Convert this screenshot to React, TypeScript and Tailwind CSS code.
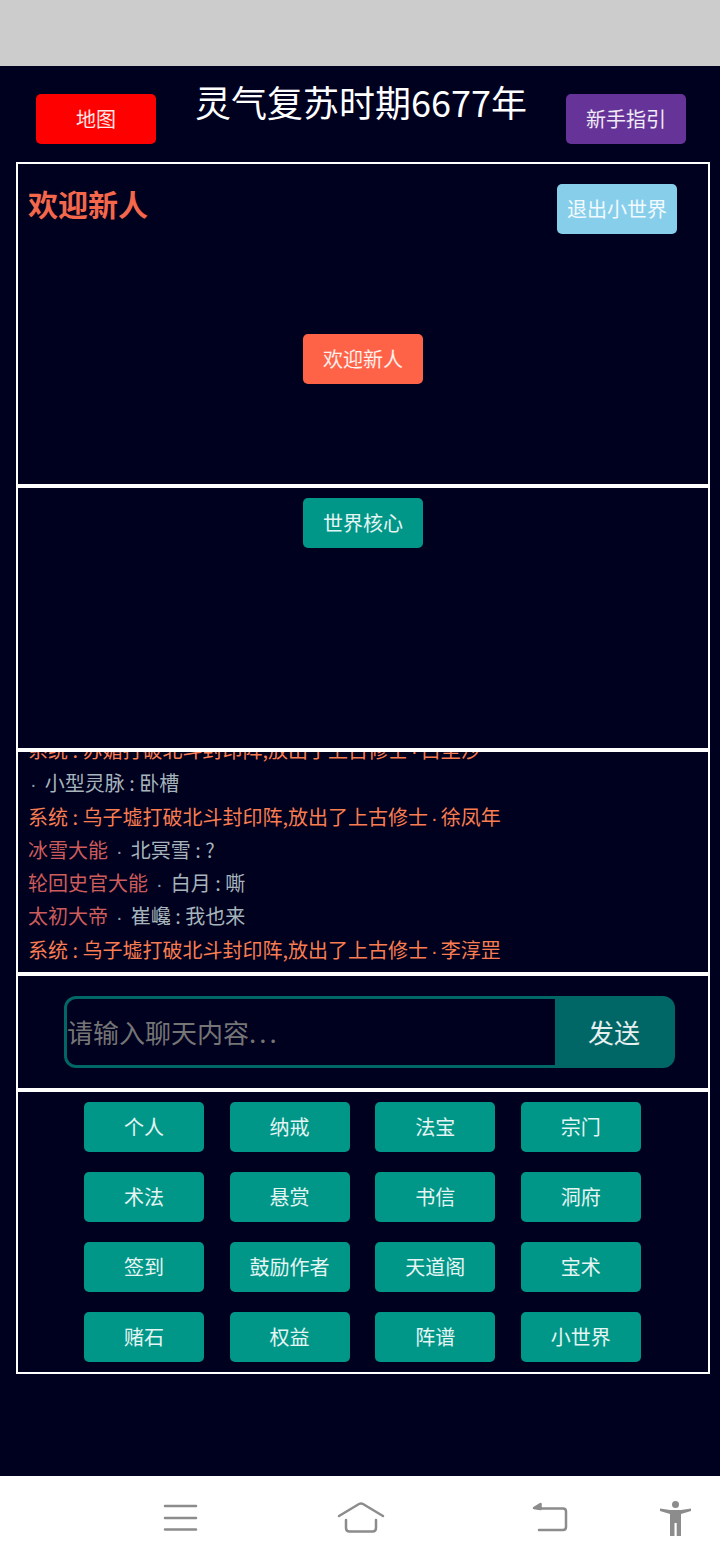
const font = "font-['Noto_Sans_CJK_SC','Noto_Sans',sans-serif]"
const dotFont = "font-['Liberation_Sans',sans-serif]"

const chat = [
  { sys: ['系统 : 苏媚打破北斗封印阵,放出了上古修士', '白尘沙'] },
  { title: '', name: '小型灵脉 : 卧槽' },
  { sys: ['系统 : 乌子墟打破北斗封印阵,放出了上古修士', '徐凤年'] },
  { title: '冰雪大能', name: '北冥雪 : ?' },
  { title: '轮回史官大能', name: '白月 : 嘶' },
  { title: '太初大帝', name: '崔巉 : 我也来' },
  { sys: ['系统 : 乌子墟打破北斗封印阵,放出了上古修士', '李淳罡'] },
]

const menu = ['个人', '纳戒', '法宝', '宗门', '术法', '悬赏', '书信', '洞府', '签到', '鼓励作者', '天道阁', '宝术', '赌石', '权益', '阵谱', '小世界']

function Btn({ label, color }: { label: string; color: string }) {
  return (
    <button className={`w-[120px] h-[50px] rounded-[5px] text-[20px] leading-[50px] text-white/90 text-center ${color}`}>
      {label}
    </button>
  )
}

export default function App() {
  return (
    <div className={`w-[720px] h-[1560px] flex flex-col overflow-hidden bg-[#00001f] ${font}`}>
      <div className="h-[66px] shrink-0 bg-[#cccccc]" />

      <div className="h-[96px] shrink-0 flex justify-between pl-9 pr-[34px] pt-7">
        <Btn label="地图" color="bg-[#ff0000]" />
        <h1 className="text-[36px] leading-[50px] -mt-[18px] text-white whitespace-nowrap h-[50px]">灵气复苏时期6677年</h1>
        <Btn label="新手指引" color="bg-[#663399]" />
      </div>

      <div className="mx-4 w-[694px] h-[1212px] shrink-0 border-2 border-white flex flex-col">
        <div className="h-[320px] shrink-0 flex flex-col px-[10px] pt-5">
          <div className="flex justify-between items-start pr-[21px]">
            <h2 className="text-[30px] leading-[44px] -mt-[3px] font-bold text-[#f4674b]">欢迎新人</h2>
            <Btn label="退出小世界" color="bg-[#87ceeb]" />
          </div>
          <div className="flex justify-center mt-[100px]">
            <Btn label="欢迎新人" color="bg-[#ff6347]" />
          </div>
        </div>

        <div className="h-[264px] shrink-0 border-t-4 border-white flex justify-center pt-[10px]">
          <Btn label="世界核心" color="bg-[#009688]" />
        </div>

        <div className="h-[224px] shrink-0 border-t-4 border-white flex flex-col justify-end overflow-hidden px-[10px] pb-[6px]">
          {chat.map((c, i) => (
            <div key={i} className="h-[33.3px] shrink-0 text-[20px] leading-[33px] whitespace-nowrap">
              {c.sys ? (
                <span className="text-[#f97d50]">
                  {c.sys[0]}
                  <span className={`${dotFont} mx-[3px]`}>·</span>
                  {c.sys[1]}
                </span>
              ) : (
                <>
                  <span className="text-[#cd5c5c]">{c.title}</span>
                  <span className={`${dotFont} text-[#8a9ba8] ${c.title ? 'mx-[8px]' : 'ml-[2px] mr-[8px]'}`}>·</span>
                  <span className="text-[#a5b5bb]">{c.name}</span>
                </>
              )}
            </div>
          ))}
        </div>

        <div className="h-[116px] shrink-0 border-t-4 border-white flex pl-[46px] pt-[20px]">
          <div className="w-[611px] h-[72px] rounded-xl border-[3px] border-[#006666] bg-[#006666] flex overflow-hidden">
            <div className="w-[488px] h-full bg-[#00001f] text-[26px] leading-[66px] text-[#757575] whitespace-nowrap">
              请输入聊天内容<span className="tracking-[3px]">...</span>
            </div>
            <div className="flex-1 text-[26px] leading-[66px] text-center text-white/90 pl-[1px]">发送</div>
          </div>
        </div>

        <div className="flex-1 border-t-4 border-white pt-[10px] pl-[66px]">
          <div className="grid grid-cols-[120px_120px_120px_120px] gap-x-[25.6px] gap-y-[20px]">
            {menu.map(m => (
              <Btn key={m} label={m} color="bg-[#009688]" />
            ))}
          </div>
        </div>
      </div>

      <div className="h-[102px] shrink-0" />

      <div className="flex-1 bg-white flex items-start">
        <svg className="ml-[162px] mt-[26px]" width="38" height="34" viewBox="0 0 38 34" fill="none" stroke="#8c8c8c" strokeWidth="2.5" strokeLinecap="round">
          <path d="M3 4h31M3 16h31M3 27.5h31" />
        </svg>
        <svg className="ml-[136px] mt-[24px]" width="50" height="36" viewBox="0 0 50 36" fill="none" stroke="#8c8c8c" strokeWidth="2.5" strokeLinecap="round" strokeLinejoin="round">
          <path d="M3 16 23 4q2-1 4 0l20 12" />
          <path d="M10 20v8q0 3.5 3.5 3.5h23q3.5 0 3.5-3.5v-8" />
        </svg>
        <svg className="ml-[144px] mt-[24px]" width="40" height="34" viewBox="0 0 40 34" fill="none" stroke="#8c8c8c" strokeWidth="2.5" strokeLinecap="round" strokeLinejoin="round">
          <path d="M8 8.5h25q3 0 3 3v15.500q0 3-3 3H9" />
          <path d="M4 8 10.500 4v5z" fill="#8c8c8c" />
        </svg>
        <svg className="ml-[88px] mt-[24px]" width="34" height="38" viewBox="0 0 34 38" fill="#8c8c8c">
          <circle cx="17.500" cy="4.500" r="3.500" />
          <path d="M2 8.500 12 10h11l10-1.500V11l-10 3v22h-4.300V23h-2.200v13H12V14L2 11z" />
        </svg>
      </div>
    </div>
  )
}
